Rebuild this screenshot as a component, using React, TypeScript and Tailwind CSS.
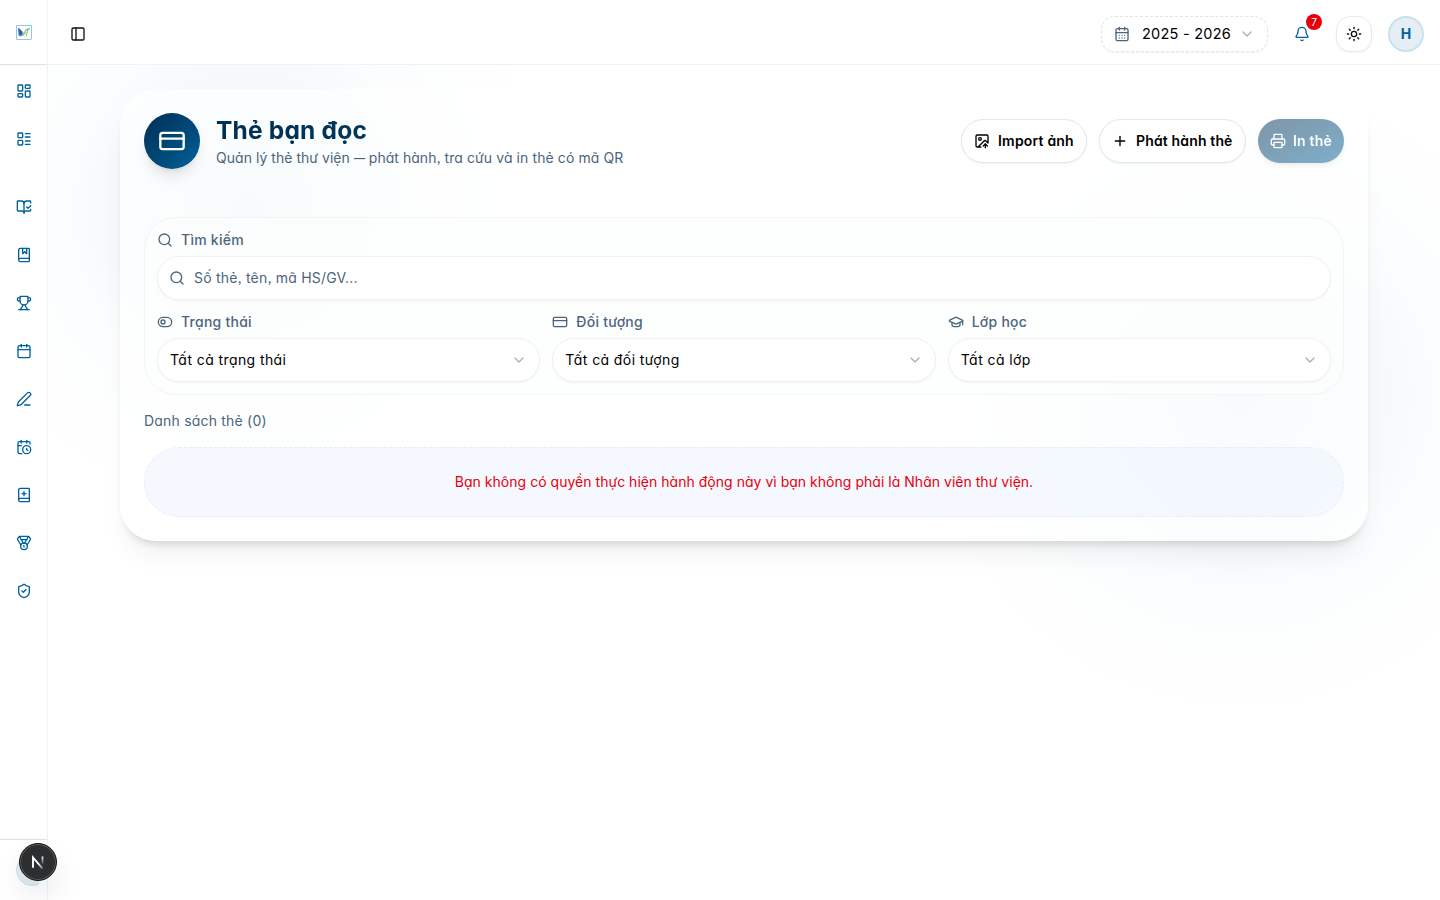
import type { ReactNode } from "react";
import {
  LayoutDashboard, LayoutList, BookOpenCheck, BookMarked, Trophy, Calendar, PenLine,
  CalendarClock, BookPlus, Medal, ShieldCheck, PanelLeft, CalendarDays, ChevronDown, Bell,
  Sun, CreditCard, ImageUp, Plus, Printer, Search, ToggleLeft, GraduationCap,
} from "lucide-react";

const mainNav = [LayoutDashboard, LayoutList];
const libraryNav = [BookOpenCheck, BookMarked, Trophy, Calendar, PenLine, CalendarClock, BookPlus, Medal, ShieldCheck];

function Logo() {
  return (
    <svg width="16" height="16" viewBox="0 0 16 16" fill="none" className="mt-px">
      <rect x="0.5" y="0.5" width="15" height="14" rx="0.5" fill="#fff" stroke="#9dbfe0" />
      <path d="M10 .5h5.500v5" stroke="#7fdcc4" />
      <path d="M2 2.500l3 3v6l-2.500-1z" fill="#2d7fb8" />
      <path d="M3 3l4 4.500-1 3.500-2.500-3z" fill="#2c5f9e" />
      <path d="M6.500 6l2 3.500-3 2z" fill="#5bb5d8" />
      <path d="M7.500 8.500l2.500-5.500-.3 5-1.500 2z" fill="#f2a93b" />
      <path d="M9.500 4.500l4.500-1.700-.5 1.700-1.500.8-1 5.200-1 1 .8-6z" fill="#49c6a8" />
    </svg>
  );
}

function Field({ icon, label, children }: { icon: ReactNode; label: string; children: ReactNode }) {
  return (
    <div className="flex flex-col gap-1.5">
      <div className="flex h-5 items-center gap-2 text-[14px] font-medium tracking-[0.25px] text-[#4c657d]">
        {icon}
        <span>{label}</span>
      </div>
      {children}
    </div>
  );
}

function SelectBox({ value }: { value: string }) {
  return (
    <div className="flex h-11 items-center justify-between rounded-[22px] border border-[#eff3f4] bg-white px-3 text-[14px] tracking-[0.4px] text-black shadow-xs">
      <span>{value}</span>
      <ChevronDown size={16} className="text-[#a5b2be]" />
    </div>
  );
}

export default function App() {
  return (
    <div className="flex h-[900px] w-[1440px] overflow-hidden bg-white font-['Inter','Noto_Sans',sans-serif] text-[14px] leading-5 [font-feature-settings:'cv11','ss03']">
      <aside className="relative flex w-12 shrink-0 flex-col border-r border-[#f0f2f3] bg-white">
        <div className="flex h-[65px] items-center justify-center border-b border-[#dfe2e4]"><Logo /></div>
        <nav className="flex flex-1 flex-col items-center gap-5 pt-[10px] text-[#00619a]">
          <div className="flex flex-col gap-4">
            {mainNav.map((Icon, i) => (
              <a key={i} className="flex size-8 items-center justify-center"><Icon size={16} /></a>
            ))}
          </div>
          <div className="flex flex-col gap-4 pt-4">
            {libraryNav.map((Icon, i) => (
              <a key={i} className="flex size-8 items-center justify-center"><Icon size={16} /></a>
            ))}
          </div>
        </nav>
        <div className="flex h-[61px] items-center border-t border-[#dfe2e4] px-2">
          <div className="w-8 overflow-hidden pl-2">
            <div className="size-8 rounded-full border border-[#cfe1ec] bg-[#e3edf4]" />
          </div>
        </div>
        <div className="absolute top-[843px] left-[19px] z-20 flex size-[38px] items-center justify-center rounded-full border border-[#171717] bg-[#2d2e30] shadow-[inset_0_0_0_1px_#5b5c5e,0_16px_32px_-8px_rgba(0,0,0,0.24)]">
          <svg width="14" height="14" viewBox="0 0 14 14" fill="none" strokeWidth="1.900">
            <defs>
              <linearGradient id="stem" x1="0" y1="1" x2="0" y2="10" gradientUnits="userSpaceOnUse">
                <stop stopColor="#fff" /><stop offset="1" stopColor="#fff" stopOpacity="0" />
              </linearGradient>
              <linearGradient id="slash" x1="8" y1="8.500" x2="13" y2="14" gradientUnits="userSpaceOnUse">
                <stop stopColor="#fff" /><stop offset="1" stopColor="#fff" stopOpacity="0.200" />
              </linearGradient>
            </defs>
            <path d="M2 12.700V2.500L11.500 13.500" stroke="url(#slash)" />
            <rect x="10.600" y="1.500" width="1.800" height="8.500" fill="url(#stem)" />
          </svg>
        </div>
      </aside>

      <div className="flex min-w-0 flex-1 flex-col">
        <header className="flex h-[65px] shrink-0 items-center justify-between border-b border-[#f0f2f3] bg-white pt-1 pr-4 pb-0 pl-[22px]">
          <PanelLeft size={16} className="text-[#111]" />
          <div className="flex items-center">
            <div className="flex h-9 w-[167px] items-center rounded-[14px] border border-dashed border-[#dfe6e8] bg-white pl-3 shadow-xs">
              <CalendarDays size={16} className="text-[#4c657d]" />
              <span className="ml-3 w-[89px] whitespace-nowrap text-[14.5px] tracking-[0.25px] text-black">2025 - 2026</span>
              <ChevronDown size={16} className="ml-2 text-[#a5b2be]" />
            </div>
            <div className="relative ml-4 flex size-9 items-center justify-center">
              <Bell size={16} className="text-[#00619a]" />
              <span className="absolute -top-0.5 left-[22px] flex size-4 items-center justify-center rounded-full bg-[#e7000b] text-[10px] text-white">7</span>
            </div>
            <div className="ml-4 flex size-9 items-center justify-center rounded-[14px] border border-[#e7eaec] bg-white shadow-xs">
              <Sun size={16} className="text-[#111]" />
            </div>
            <div className="ml-4 flex size-9 items-center justify-center rounded-full border-2 border-[#cce0eb] bg-[#e5eef5] font-bold text-[#00619a]">H</div>
          </div>
        </header>

        <main className="flex-1 bg-[radial-gradient(circle_at_1192px_330px,rgba(0,110,165,0.080)_0px,rgba(0,110,165,0.050)_110px,rgba(0,110,165,0.022)_180px,rgba(0,110,165,0.009)_250px,transparent_330px),radial-gradient(circle_at_200px_146px,rgba(0,110,165,0.080)_0px,rgba(0,110,165,0.047)_115px,rgba(0,110,165,0.015)_185px,rgba(0,110,165,0.005)_260px,transparent_330px)] px-[72px] pt-6">
          <section className="flex flex-col rounded-[36px] bg-white/65 p-6 shadow-[0_20px_25px_-5px_rgba(0,0,0,0.05),0_8px_10px_-6px_rgba(0,0,0,0.16)]">
            <div className="flex items-center justify-between">
              <div className="flex items-center gap-4">
                <div className="flex size-14 items-center justify-center rounded-full bg-linear-to-br from-[#002f53] to-[#00619a] text-white shadow-lg">
                  <CreditCard size={28} />
                </div>
                <div>
                  <h1 className="bg-linear-to-r from-[#002f53] to-[#004471] bg-clip-text pb-0.5 text-[24.5px] leading-8 font-bold tracking-[0.2px] whitespace-nowrap text-transparent">Thẻ bạn đọc</h1>
                  <p className="whitespace-nowrap tracking-[0.035px] text-[#4c657d]">Quản lý thẻ thư viện <span className="inline-block w-[11px] origin-left scale-x-[0.8]">—</span> phát hành, <span className="tracking-[0.09px]">tra cứu và in thẻ có mã QR</span></p>
                </div>
              </div>
              <div className="flex gap-3 font-semibold whitespace-nowrap text-black">
                <button className="flex h-11 w-[126px] items-center gap-2 rounded-[22px] border border-[#e2e7e8] bg-white pl-3 tracking-[0.2px] shadow-xs">
                  <ImageUp size={16} /><span>Import ảnh</span>
                </button>
                <button className="flex h-11 w-[147px] items-center gap-2 rounded-[22px] border border-[#e2e7e8] bg-white pl-3 tracking-[0.15px] shadow-xs">
                  <Plus size={16} /><span>Phát hành thẻ</span>
                </button>
                <button className="flex h-11 w-[86px] items-center gap-[7px] rounded-[22px] bg-linear-to-br from-[#002f53] to-[#00619a] pl-3 tracking-[0.2px] text-white opacity-50 shadow-md">
                  <Printer size={16} /><span>In thẻ</span>
                </button>
              </div>
            </div>

            <div className="mt-12 flex flex-col gap-3 rounded-[32px] border border-[#f1f5f6] bg-[#fdfefe]/80 p-3">
              <Field icon={<Search size={16} />} label="Tìm kiếm">
                <div className="flex h-11 items-center gap-[9px] rounded-[22px] border border-[#eff3f4] bg-white px-[11px] tracking-[0.2px] text-[#4c657d] shadow-xs">
                  <Search size={16} /><span>Số thẻ, tên, mã HS/GV...</span>
                </div>
              </Field>
              <div className="grid grid-cols-3 gap-3">
                <Field icon={<ToggleLeft size={16} />} label="Trạng thái"><SelectBox value="Tất cả trạng thái" /></Field>
                <Field icon={<CreditCard size={16} />} label="Đối tượng"><SelectBox value="Tất cả đối tượng" /></Field>
                <Field icon={<GraduationCap size={16} />} label="Lớp học"><SelectBox value="Tất cả lớp" /></Field>
              </div>
            </div>

            <p className="mt-4 tracking-[0.2px] text-[#4c657d]">Danh sách thẻ (0)</p>
            <div className="mt-4 flex h-[70px] items-center justify-center rounded-[36px] border border-dashed border-[#e6edf3] bg-[#edf4ff]/55 tracking-[0.025px] text-[#e7000b]">
              Bạn không có quyền thực hiện hành động này vì bạn không phải là Nhân viên thư viện.
            </div>
          </section>
        </main>
      </div>
    </div>
  );
}
